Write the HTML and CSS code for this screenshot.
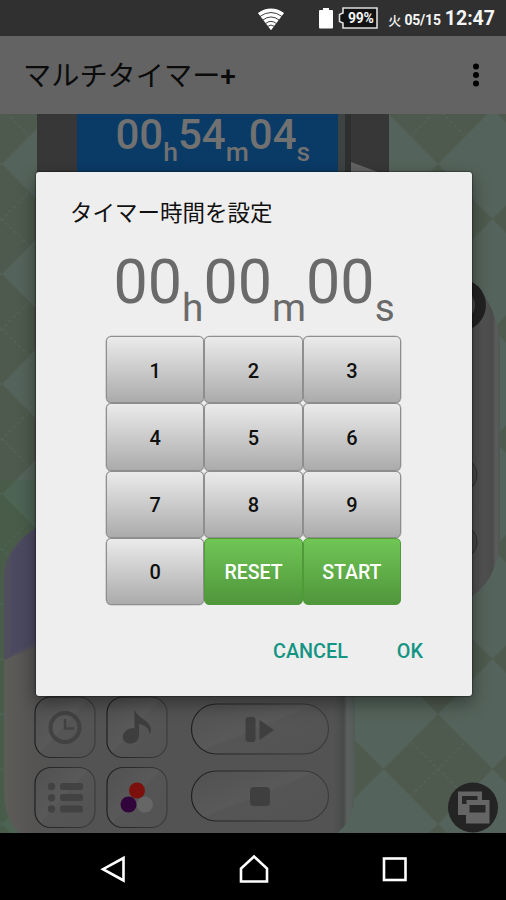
FILE: index.html
```html
<!DOCTYPE html>
<html lang="ja">
<head>
<meta charset="utf-8">
<title>マルチタイマー+</title>
<link rel="stylesheet" href="styles.css">
</head>
<body>
<div class="device">
  <header class="status">
    <svg class="wifi" width="28" height="24" viewBox="0 0 30 24">
      <path d="M1 5.5Q15-4 29 5.5L15 24Z" fill="#fff"/>
      <g fill="none" stroke="#303030" stroke-width="1"><path d="M3 9.4Q15 0.7 27 9.4"/><path d="M6 13.3Q15 6.3 24 13.3"/><path d="M9 17Q15 12 21 17"/><path d="M11 20Q15 17 19 20"/></g>
    </svg>
    <svg class="cell" width="14" height="22" viewBox="0 0 14 22"><path d="M4 1h6v2h3a1 1 0 0 1 1 1v16.500a1 1 0 0 1-1 1H1a1 1 0 0 1-1-1V4a1 1 0 0 1 1-1h3z" fill="#fff"/></svg>
    <div class="battery">
      <svg width="40" height="22" viewBox="0 0 40 22"><path d="M5 1h34v20H5v-5L1.500 14.500V7.500L5 6z" fill="#111" stroke="#ddd" stroke-width="1.600"/></svg>
      <span>99%</span>
    </div>
    <span class="date"><b class="day">火</b> 05/15</span>
    <span class="clock">12:47</span>
  </header>
  <div class="appbar">
    <h1>マルチタイマー<span class="plus">+</span></h1>
    <svg width="8" height="24" viewBox="0 0 8 24" fill="#000"><circle cx="4" cy="3.500" r="3"/><circle cx="4" cy="12" r="3"/><circle cx="4" cy="20.500" r="3"/></svg>
  </div>
  <main class="stage">
    <svg class="scene" width="506" height="719" viewBox="0 114 506 719">
      <defs>
        <pattern id="argyle" width="109" height="110" patternUnits="userSpaceOnUse" x="-52.500" y="164">
          <rect width="109" height="110" fill="#54635b"/>
          <path d="M54.500 0L109 55L54.500 110L0 55Z" fill="#4e5a4d"/>
          <path d="M28.500 29L80.500 81M80.500 29L28.500 81" stroke="#5d6a60" stroke-width="1" stroke-dasharray="3 3"/>
        </pattern>
        <linearGradient id="body" x1="0" x2="1"><stop offset="0" stop-color="#5c5c58"/><stop offset=".035" stop-color="#5a5957"/><stop offset=".08" stop-color="#555453"/><stop offset=".15" stop-color="#535353"/><stop offset=".94" stop-color="#535353"/><stop offset=".968" stop-color="#484a49"/><stop offset=".978" stop-color="#5c605e"/><stop offset="1" stop-color="#525b57"/></linearGradient>
        <linearGradient id="side" x1="0" x2="1"><stop offset="0" stop-color="#494949"/><stop offset=".7" stop-color="#525252"/><stop offset=".88" stop-color="#4b4b4b"/><stop offset=".93" stop-color="#5b5d5c"/><stop offset="1" stop-color="#505653"/></linearGradient>
        <linearGradient id="key" x1="0" y1="0" x2="1" y2=".9"><stop offset="0" stop-color="#515151"/><stop offset=".49" stop-color="#595959"/><stop offset=".52" stop-color="#555"/><stop offset="1" stop-color="#535353"/></linearGradient>
        <linearGradient id="edge" x1="0" y1="0" x2="1" y2="0"><stop offset="0" stop-color="#202020"/><stop offset="1" stop-color="#3c3c3c"/></linearGradient>
      </defs>
      <rect y="114" width="506" height="719" fill="url(#argyle)"/>
      <rect y="480" width="36" height="353" fill="#38623e" opacity=".25"/>
      <path d="M440 270C480 276 500 310 500 350V535C500 565 488 590 462 602Z" fill="url(#side)"/>
      <circle cx="460" cy="305" r="26" fill="#222"/><circle cx="460" cy="305" r="15" fill="#484848"/>
      <g fill="#464646" stroke="#303030"><circle cx="460" cy="475" r="17"/><circle cx="460" cy="542" r="17"/></g>
      <path d="M36 528Q4 548 4 578V790Q4 818 19 833H337C351 822 355 808 355 787V528Z" fill="url(#body)"/>
      <path d="M36 528Q4 548 4 578V660L36 646Z" fill="#504d5d"/>
      <path d="M11 556V654L36 643V528Q20 539 11 556Z" fill="#4b4960"/>
      <rect x="37" y="114" width="352" height="80" fill="#373737"/>
      <rect x="77" y="114" width="261" height="60" fill="#0a3a66"/>
      <path d="M338 114h7v60h-7z" fill="#3d4242"/><path d="M345 114h6v60h-6z" fill="#2d302f"/>
      <path d="M351 162L378 172H351Z" fill="#626262"/>
      <g fill="url(#key)" stroke="url(#edge)" stroke-width="1.200">
        <rect x="35" y="697" width="60" height="60.500" rx="16"/>
        <rect x="107" y="697" width="60" height="60.500" rx="16"/>
        <rect x="35" y="767.500" width="60" height="60" rx="16"/>
        <rect x="107" y="767.500" width="60" height="60" rx="16"/>
        <rect x="191.500" y="704" width="137" height="50" rx="25"/>
        <rect x="191.500" y="771" width="137" height="50" rx="25"/>
      </g>
      <circle cx="65" cy="727.500" r="14.500" fill="none" stroke="#424242" stroke-width="4"/>
      <path d="M65 719V728.500H74" fill="none" stroke="#424242" stroke-width="2.500"/>
      <path d="M134.500 710C138 718 150 721 151 729Q151 732 149.500 734C149 728 145 725 139 724V735C139 742 132 745 127 743C120 740 122 731 130 728.500Q133 728 134.500 728Z" fill="#3e3e3e"/>
      <g fill="#424242"><circle cx="51.500" cy="786.500" r="3.700"/><circle cx="51.500" cy="797.700" r="3.700"/><circle cx="51.500" cy="809" r="3.700"/><rect x="60" y="783" width="23" height="7" rx="2.500"/><rect x="60" y="794" width="23" height="7" rx="2.500"/><rect x="60" y="805.500" width="23" height="7" rx="2.500"/></g>
      <circle cx="145" cy="804.500" r="8" fill="#666"/><circle cx="137" cy="790.500" r="8" fill="#7b100c"/><circle cx="128.500" cy="804.500" r="8" fill="#31043b"/>
      <g fill="#3f3f3f"><rect x="245.500" y="717" width="10" height="25" rx="3"/><path d="M259.500 720L274 730L259.500 740Z"/><rect x="250" y="787" width="20" height="19" rx="4"/></g>
      <circle cx="473" cy="807.500" r="25" fill="#242424"/>
      <path d="M458 791.500h24v8.500h7.500v23.500h-23.500v-8.500h-8z" fill="#656565"/>
      <path d="M462 796h15.500v4h-11v4h-4.500zM469.500 805h16v7.500h-16z" fill="#272727"/>
    </svg>
    <div class="running">00<sub>h</sub>54<sub>m</sub>04<sub>s</sub></div>
  </main>
  <nav class="nav">
    <svg width="506" height="67" viewBox="0 0 506 67" fill="none" stroke="#fff" stroke-width="2.600"><path d="M123.500 25V47.500L103 36.200Z"/><path d="M254 23.500L267 35.500V48.500H241V35.500Z"/><rect x="384" y="25.500" width="21.500" height="21.500"/></svg>
  </nav>
  <section class="dialog">
    <h2>タイマー時間を設定</h2>
    <div class="entry">00<sub>h</sub>00<sub>m</sub>00<sub>s</sub></div>
    <div class="keypad">
      <button>1</button><button>2</button><button>3</button>
      <button>4</button><button>5</button><button>6</button>
      <button>7</button><button>8</button><button>9</button>
      <button>0</button><button class="green">RESET</button><button class="green">START</button>
    </div>
    <div class="actions"><a>CANCEL</a><a>OK</a></div>
  </section>
</div>
</body>
</html>
```
FILE: styles.css
```css
* { box-sizing: border-box; }
body { margin: 0; font-family: Roboto, "Noto Sans CJK JP", sans-serif; }
.device { position: relative; display: flex; flex-direction: column; width: 506px; height: 900px; overflow: hidden; background: #000; }
.status { display: flex; align-items: center; justify-content: flex-end; flex: 0 0 36px; height: 36px; padding-right: 11px; background: #303030; color: #f5f5f5; white-space: nowrap; }
.wifi { margin: 2px 34px 0 0; }
.cell { margin-right: 5px; }
.battery { position: relative; display: flex; width: 40px; height: 22px; margin-right: 10px; }
.battery span { position: absolute; left: 6px; top: 0; width: 33px; text-align: center; font-size: 14px; line-height: 22px; font-weight: 700; letter-spacing: -.3px; }
.date { font-size: 14px; font-weight: 700; line-height: 20px; margin: 4px 4px 0 0; letter-spacing: -.2px; }
.day { font-size: 13px; font-weight: 500; }
.clock { font-size: 19.500px; font-weight: 700; line-height: 24px; margin-top: 2px; }
.appbar { display: flex; align-items: center; justify-content: space-between; flex: 0 0 78px; height: 78px; padding: 0 26px 0 23px; background: #636363; }
h1 { margin: 0; padding-top: 3px; font-size: 28.200px; line-height: 40px; font-weight: 400; color: #0b0b0b; white-space: nowrap; }
.plus { font-weight: 500; }
.stage { position: relative; flex: 0 0 719px; height: 719px; }
.scene { position: absolute; left: 0; top: 0; }
sub { line-height: 0; font-size: inherit; }
.running { position: relative; padding-left: 115.500px; font-size: 42px; line-height: 42px; font-weight: 500; color: #717171; white-space: nowrap; }
.running sub { font-size: 26.500px; vertical-align: -11.500px; }
.nav { flex: 0 0 67px; height: 67px; background: #000; }
.dialog { position: absolute; left: 36px; top: 172px; width: 436px; height: 524px; padding: 22px 34px 24px; border-radius: 3px; background: #eee; box-shadow: 0 0 2px #000, 0 7px 18px rgba(0, 0, 0, .4); z-index: 2; }
h2 { margin: 0; font-family: "Noto Sans CJK JP", sans-serif; font-size: 22.500px; line-height: 34px; font-weight: 400; color: #111; white-space: nowrap; }
.entry { height: 108px; padding: 24px 0 0 43.500px; font-size: 61px; line-height: 61px; color: #6a6a6a; white-space: nowrap; }
.entry sub { font-size: 38.800px; vertical-align: -17.500px; }
.keypad { display: grid; grid-template-columns: repeat(3, 1fr); grid-template-rows: repeat(4, 1fr); width: 295px; height: 269px; margin-left: 36px; }
button { margin: 0; padding: 2px 0 0; border: 1.500px solid #8e8e8e; border-radius: 5px; background: linear-gradient(#ebebeb, #ababab); box-shadow: 0 0 0 .3px #8e8e8e; color: #101010; font: 500 20px Roboto, sans-serif; }
.green { padding-top: 3px; border-color: #4f9b38; background: linear-gradient(#70c655, #50963c); box-shadow: none; color: #fff; font-size: 19.500px; }
.actions { display: flex; justify-content: flex-end; gap: 49px; padding: 34px 15px 0 0; font-size: 19.800px; line-height: 26px; font-weight: 500; color: #149584; }
```
